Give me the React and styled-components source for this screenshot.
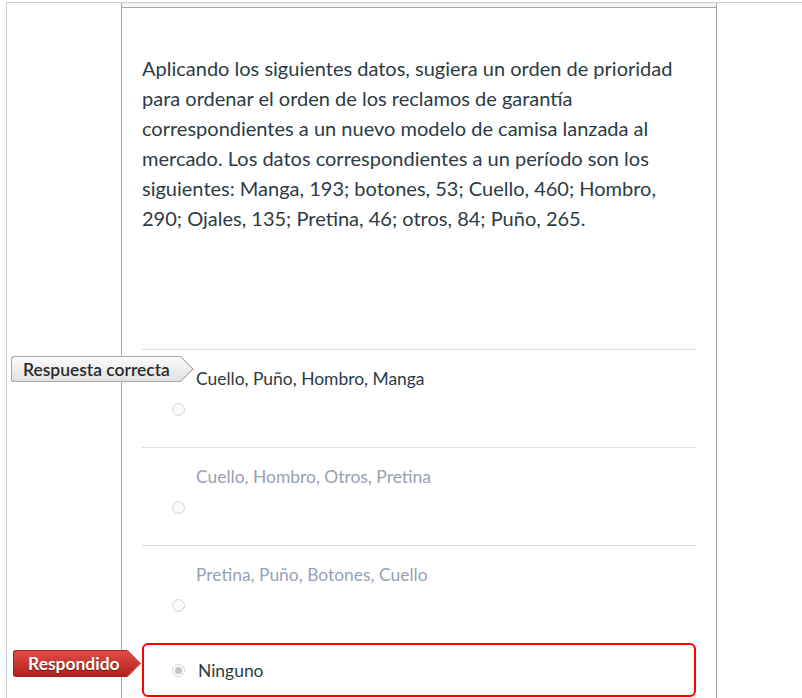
import React from "react";
import styled, { createGlobalStyle, css } from "styled-components";

const Global = createGlobalStyle`
  html, body { margin: 0; padding: 0; background: #fff; }
  body { font-family: Lato, "Open Sans", sans-serif; color: #2d3b45; overflow: hidden; }
`;

const Page = styled.div`
  margin: 2px 0 0 6px;
  border-top: 1px solid #c7cdd1;
  border-left: 1px solid #c7cdd1;
  height: 720px;
`;

const Question = styled.div`
  margin-left: 114px;
  width: 594px;
  border-left: 1px solid #a8a8a8;
  border-right: 1px solid #a8a8a8;
  min-height: 720px;
`;

const Header = styled.div`
  height: 4px;
  background: #f3f4f5;
  border-bottom: 1px solid #a8a8a8;
`;

const Body = styled.div`
  padding: 45px 20px 0 20px;
`;

const Text = styled.p`
  margin: 0;
  max-width: 540px;
  font-size: 20px;
  line-height: 30px;
  color: #2d3b45;
  height: 296px;
`;

const Answer = styled.div`
  position: relative;
  border-top: 1px solid #dedede;
  padding: 19px 0 31px 0;
`;

const AnswerText = styled.div`
  padding-left: 54px;
  font-size: 17.45px;
  line-height: 20px;
  color: ${(p) => (p.$faded ? "#97a1b3" : "#2d3b45")};
`;

const Radio = styled.span`
  display: block;
  width: 11px;
  height: 11px;
  border-radius: 50%;
  border: 1px solid #d6d6d6;
  background: #fafafa;
  box-sizing: content-box;
  position: relative;
  flex: none;
  ${(p) =>
    p.$checked &&
    css`
      &::after {
        content: "";
        position: absolute;
        left: 2px;
        top: 2px;
        width: 7px;
        height: 7px;
        border-radius: 50%;
        background: #c4c4c4;
      }
    `}
`;

const RadioRow = styled.div`
  margin: 14px 0 0 30px;
`;

const Selected = styled.div`
  position: relative;
  border: 2px solid #ff0000;
  border-radius: 6px;
  height: 50px;
  display: flex;
  align-items: center;
  padding-left: 28px;
  gap: 13px;
  font-size: 17.45px;
  color: #2d3b45;
`;

const Tag = styled.div`
  position: absolute;
  z-index: 2;
  left: ${(p) => p.$left}px;
  top: ${(p) => p.$top}px;
  width: ${(p) => p.$w}px;
  height: ${(p) => p.$h}px;
  box-sizing: border-box;
  padding-left: ${(p) => p.$pl}px;
  display: flex;
  align-items: center;
  font-size: 17.45px;
  border-radius: 3px 0 0 3px;
  white-space: nowrap;
  ${(p) =>
    p.$red
      ? css`
          background: linear-gradient(#e24b46, #b0221e);
          color: #fff;
          font-weight: 700;
          text-shadow: 0 1px 1px rgba(0, 0, 0, 0.45);
          border: 1px solid #a81f1b;
          border-right: none;
        `
      : css`
          background: linear-gradient(#fcfcfc, #e0e0e0);
          color: #2b2b2b;
          font-weight: 600;
          border: 1px solid #a9a9a9;
          border-right: none;
        `}
  &::after {
    content: "";
    position: absolute;
    width: ${(p) => p.$arrow}px;
    height: ${(p) => p.$arrow}px;
    left: calc(100% - ${(p) => p.$arrow / 2}px);
    top: calc(50% - ${(p) => p.$arrow / 2}px);
    transform: rotate(45deg);
    box-sizing: border-box;
    ${(p) =>
      p.$red
        ? css`
            background: linear-gradient(-45deg, #b0221e, #e24b46);
            border-top: 1px solid #a81f1b;
            border-right: 1px solid #a81f1b;
          `
        : css`
            background: linear-gradient(-45deg, #e0e0e0, #fcfcfc);
            border-top: 1px solid #a9a9a9;
            border-right: 1px solid #a9a9a9;
          `}
  }
`;

const TagLabel = styled.span`
  position: relative;
  z-index: 1;
`;

const answers = [
  { text: "Cuello, Puño, Hombro, Manga", faded: false, correct: true },
  { text: "Cuello, Hombro, Otros, Pretina", faded: true },
  { text: "Pretina, Puño, Botones, Cuello", faded: true },
];

export default function App() {
  return (
    <>
      <Global />
      <Page>
        <Question>
          <Header />
          <Body>
            <Text>
              Aplicando los siguientes datos, sugiera un orden de prioridad para ordenar el orden de los
              reclamos de garantía correspondientes a un nuevo modelo de camisa lanzada al mercado. Los
              datos correspondientes a un período son los siguientes: Manga, 193; botones, 53; Cuello,
              460; Hombro, 290; Ojales, 135; Pretina, 46; otros, 84; Puño, 265.
            </Text>
            {answers.map((a) => (
              <Answer key={a.text}>
                {a.correct && (
                  <Tag $left={-131} $top={6} $w={170} $h={26} $pl={11} $arrow={18}>
                    <TagLabel>Respuesta correcta</TagLabel>
                  </Tag>
                )}
                <AnswerText $faded={a.faded}>{a.text}</AnswerText>
                <RadioRow>
                  <Radio />
                </RadioRow>
              </Answer>
            ))}
            <Selected>
              <Tag $red $left={-131} $top={5} $w={114} $h={27} $pl={14} $arrow={19}>
                <TagLabel>Respondido</TagLabel>
              </Tag>
              <Radio $checked />
              <span>Ninguno</span>
            </Selected>
          </Body>
        </Question>
      </Page>
    </>
  );
}
